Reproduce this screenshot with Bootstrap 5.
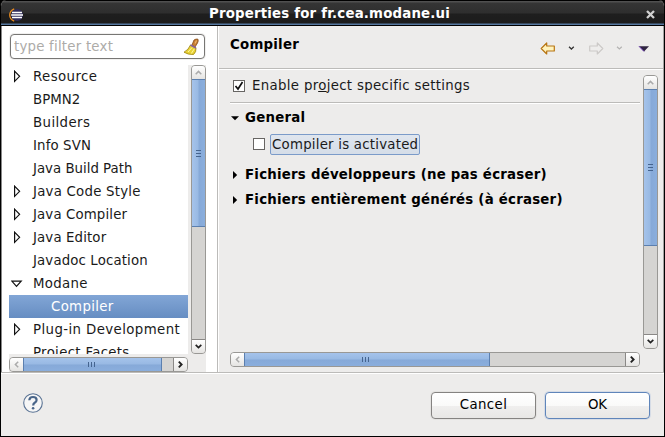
<!DOCTYPE html>
<html lang="en">
<head>
<meta charset="utf-8">
<title>Properties for fr.cea.modane.ui</title>
<link href="https://cdn.jsdelivr.net/npm/bootstrap@5.3.0/dist/css/bootstrap.min.css" rel="stylesheet">
<style>
body{font:13.33px/23px "DejaVu Sans",sans-serif;color:#1a1a1a;background:#000;width:665px;height:437px;overflow:hidden}
svg{display:block;flex:none}
.win{width:665px;height:437px;background:#edeceb;border:solid #000;border-width:0 1px 1px;border-radius:6px 6px 0 0;overflow:hidden}
.titlebar{height:26px;background:linear-gradient(#000 0 1px,#505050 1px 2px,#353535 3px,#2e2e2e 13px,#1e1e1e 14px,#1c1c1c 23px,#55779f 24px 25px,#000 25px);color:#fff;font-weight:bold;line-height:26px}
.titlebar .cap{padding:1px 11px 0 0;letter-spacing:.19px}
.close-x{margin:2px 9px 0 0}
.main{height:346px}
.side{width:217px;background:#fff;border-right:1px solid #bcbbb9;border-left:1px solid #888;padding:8px 0 0 7px}
.filter{width:195px;height:25px;margin-left:1px;border:1px solid #777674;border-radius:4px;background:#fff;color:#adaba8;padding:0 4px 0 3px;box-shadow:0 0 0 1px #f1f0ef;letter-spacing:.22px}
.treebox{width:197px;height:307px;margin-top:6px;background:#edeceb}
.tree{width:179px;height:289px;background:#fff;overflow:hidden}
.node{height:23px;padding-left:2px}
.node .tw{width:22px}
.node .tw svg{margin-left:2px}
.node .tw svg.open{margin-left:0}
.node.sel{background:linear-gradient(#82a6d6,#668dc2);color:#fff;padding-left:20px}
.ls1{letter-spacing:.13px}.ls2{letter-spacing:.23px}.ls3{letter-spacing:.32px}.ls4{letter-spacing:.4px}
.pane{width:446px;border-left:1px solid #fff;border-right:1px solid #a3a2a1}
.head{height:42px;padding:0 13px 0 11px;font-weight:bold;color:#000}
.rule{height:2px;background:linear-gradient(#bcbbb9 50%,#fff 50%)}
.form-area{width:410px;height:282px;margin-left:11px}
.bold{font-weight:bold;color:#000}
.box{width:12px;height:12px;border:1px solid #676563;background:#fff;flex:none}
.foc{border:1px solid #7b9bc9;border-radius:2px;background:linear-gradient(#e0e6ee,#d5dde8);height:21px;line-height:19px;padding:0 1px}
.sb{background:#d5d4d2;border:1px solid #999895;border-radius:4px;overflow:hidden;flex:none}
.sb.v{width:15px}.sb.h{height:15px}
.sb .b{background:linear-gradient(#fff,#e5e4e2);flex:none}
.sb.v .b{height:14px}.sb.h .b{width:14px}
.v .b:first-child{border-bottom:1px solid #777}.v .b:last-child{border-top:1px solid #8a8886}
.h .b:first-child{border-right:1px solid #777}.h .b:last-child{border-left:1px solid #8a8886}
.th{flex:none;border:1px solid #5b7faf}
.v .th{margin:-1px -1px 0;width:15px;background:linear-gradient(90deg,#a5c3eb 0,#98b9e3 48%,#86a9d8 52%,#8aaedd)}
.h .th{margin:-1px 0 -1px -1px;height:15px;background:linear-gradient(#a5c3eb,#98b9e3 48%,#86a9d8 52%,#8aaedd)}
.foot{height:62px;padding:0 14px 0 21px}
.act{width:105px;height:27px;border:1px solid #858381;border-radius:4px;background:linear-gradient(#fff,#fafaf9 50%,#f0efee 52%,#e8e7e5);padding:0 0 2px;color:#000;font-size:13.33px;line-height:23px;box-shadow:0 0 0 1px #e4e3e1}
.act.def{border-color:#5f85ba;box-shadow:0 0 0 1px #d6dce6;margin-left:9px}
</style>
<script src="https://cdn.jsdelivr.net/npm/bootstrap@5.3.0/dist/js/bootstrap.bundle.min.js"></script>
</head>
<body>
<svg width="0" height="0" class="position-absolute"><defs>
<symbol id="tri" viewBox="0 0 9 13"><path d="M1.6 1.2V11.4L6.6 6.3Z" fill="#fff" stroke="#111" stroke-width="1.2"/></symbol>
<symbol id="up" viewBox="0 0 7 5"><path d="M.7 4.2L3.5 1.4L6.3 4.2" fill="none" stroke="currentColor" stroke-width="1.5"/></symbol>
<symbol id="dn" viewBox="0 0 7 5"><path d="M.7 .8L3.5 3.6L6.3 .8" fill="none" stroke="currentColor" stroke-width="1.7"/></symbol>
<symbol id="lf" viewBox="0 0 5 7"><path d="M4.2 .7L1.4 3.5L4.2 6.3" fill="none" stroke="currentColor" stroke-width="1.5"/></symbol>
<symbol id="rt" viewBox="0 0 5 7"><path d="M.8 .7L3.6 3.5L.8 6.3" fill="none" stroke="currentColor" stroke-width="1.9"/></symbol>
<symbol id="gv" viewBox="0 0 5 7"><path d="M0 .5H5M0 3.5H5M0 6.5H5" stroke="#45648f"/></symbol>
<symbol id="gh" viewBox="0 0 7 5"><path d="M.5 0V5M3.5 0V5M6.5 0V5" stroke="#45648f"/></symbol>
<symbol id="arr" viewBox="0 0 15 13"><path d="M1.2 6.5L6.7 1V4H14.3V9H6.7V12Z" stroke-width="1.2" stroke-linejoin="round"/></symbol>
</defs></svg>
<div class="win d-flex flex-column">
  <header class="titlebar d-flex align-items-center flex-shrink-0">
    <svg width="15" height="14" class="ms-2 mt-1" viewBox="0 0 15 14"><circle cx="8" cy="7" r="6" fill="#302c5b"/><path d="M5.2 .8C-.8 3.5-.8 10.5 5.2 13.2" fill="none" stroke="#e58a20" stroke-width="1.3"/><path d="M3 4.5H13M2.2 7H14M3 9.5H13" stroke="#fff" stroke-width="1.3"/></svg>
    <div class="cap flex-grow-1 text-center">Properties for fr.cea.modane.ui</div>
    <svg width="9" height="9" class="close-x" viewBox="0 0 9 9"><path d="M1 1L8 8M8 1L1 8" stroke="#d0d0d0" stroke-width="2.3"/></svg>
  </header>
  <div class="main d-flex flex-shrink-0">
    <aside class="side flex-shrink-0">
      <div class="filter d-flex align-items-center justify-content-between"><span>type filter text</span>
        <svg width="17" height="18" viewBox="0 0 17 18"><path d="M9 7L11 2Q13 .6 15 1.2Q15.6 3 14.5 5L12 9Z" fill="#c77d32" stroke="#854b18" stroke-width=".8"/><path d="M12 5.5L13.6 2.5" stroke="#efb666" stroke-width="1.2"/><path d="M7.5 7L13 10Q13.4 14 10.5 16.5Q5 16.8 1 14.2Q5.5 12 7.5 7Z" fill="#e8d233" stroke="#a68c16" stroke-width=".9"/><path d="M9 9.5L5 14M11.3 10.8L8.3 15.5" stroke="#fff6a0"/><path d="M7.5 7L13 10" stroke="#8a659a" stroke-width="1.5"/></svg>
      </div>
      <div class="treebox">
        <div class="d-flex justify-content-between">
          <div class="tree">
            <div class="node ls4 d-flex align-items-center"><span class="tw"><svg width="9" height="13"><use href="#tri"/></svg></span>Resource</div>
            <div class="node d-flex"><span class="tw"></span>BPMN2</div>
            <div class="node ls4 d-flex"><span class="tw"></span>Builders</div>
            <div class="node ls1 d-flex"><span class="tw"></span>Info SVN</div>
            <div class="node d-flex"><span class="tw"></span>Java Build Path</div>
            <div class="node ls2 d-flex align-items-center"><span class="tw"><svg width="9" height="13"><use href="#tri"/></svg></span>Java Code Style</div>
            <div class="node ls1 d-flex align-items-center"><span class="tw"><svg width="9" height="13"><use href="#tri"/></svg></span>Java Compiler</div>
            <div class="node ls1 d-flex align-items-center"><span class="tw"><svg width="9" height="13"><use href="#tri"/></svg></span>Java Editor</div>
            <div class="node ls1 d-flex"><span class="tw"></span>Javadoc Location</div>
            <div class="node ls3 d-flex align-items-center"><span class="tw"><svg class="open" width="12" height="8" viewBox="0 0 12 8"><path d="M.8 1.1H10.2L5.5 6.3Z" fill="#fff" stroke="#111" stroke-width="1.2"/></svg></span>Modane</div>
            <div class="node ls3 sel d-flex"><span class="tw"></span>Compiler</div>
            <div class="node ls4 d-flex align-items-center"><span class="tw"><svg width="9" height="13"><use href="#tri"/></svg></span>Plug-in Development</div>
            <div class="node ls3 d-flex"><span class="tw"></span>Project Facets</div>
          </div>
          <div class="sb v d-flex flex-column" style="height:289px">
            <div class="b d-flex align-items-center justify-content-center"><svg width="7" height="5" color="#aaa"><use href="#up"/></svg></div>
            <div class="th d-flex align-items-center justify-content-center" style="height:148px"><svg width="5" height="7"><use href="#gv"/></svg></div>
            <div class="b mt-auto d-flex align-items-center justify-content-center"><svg width="7" height="5" color="#222"><use href="#dn"/></svg></div>
          </div>
        </div>
        <div class="sb h d-flex" style="width:179px;margin-top:3px">
          <div class="b d-flex align-items-center justify-content-center"><svg width="5" height="7" color="#aaa"><use href="#lf"/></svg></div>
          <div class="th d-flex align-items-center justify-content-center" style="width:139px;padding-right:3px"><svg width="7" height="5"><use href="#gh"/></svg></div>
          <div class="b ms-auto d-flex align-items-center justify-content-center"><svg width="5" height="7" color="#222"><use href="#rt"/></svg></div>
        </div>
      </div>
    </aside>
    <main class="pane">
      <div class="head d-flex align-items-center">
        <span class="flex-grow-1 ls2" style="margin-top:-5px">Compiler</span>
        <svg width="110" height="13" viewBox="0 0 110 13" style="margin-top:2px"><use href="#arr" width="15" height="13" fill="#fff3bd" stroke="#b87512"/><path d="M29 4.8L31.4 7L33.8 4.8" fill="none" stroke="#333" stroke-width="1.3"/><g transform="translate(64 0) scale(-1 1)"><use href="#arr" width="15" height="13" fill="#eeedec" stroke="#cccac8"/></g><path d="M77 4.8L79.4 7L81.8 4.8" fill="none" stroke="#b4b3b2" stroke-width="1.2"/><path d="M99 4.2H109L104 9.6Z" fill="#2f2440"/><path d="M99 4.3L104 9.4" stroke="#6a35b5"/></svg>
      </div>
      <div class="rule"></div>
      <div class="d-flex" style="margin-top:5px">
        <div class="form-area flex-shrink-0">
          <div class="d-flex align-items-center" style="height:27px;padding:0 0 5px 3px"><span class="box"><svg width="10" height="10" viewBox="0 0 10 10"><path d="M1.5 5L4 8L8.5 1" fill="none" stroke="#111" stroke-width="1.7"/></svg></span><span class="ls3" style="margin:-2px 0 0 7px">Enable pr<u>o</u>ject specific settings</span></div>
          <div class="rule"></div>
          <div class="bold ls2 d-flex align-items-center" style="height:27px"><svg width="15" height="8" viewBox="0 0 15 8"><path d="M1 2.2H9L5 6.2Z"/></svg>General</div>
          <div class="d-flex align-items-center" style="height:26px;padding-left:23px"><span class="box"></span><span class="foc ls2" style="margin-left:5px">Compiler is activated</span></div>
          <div class="bold ls2 d-flex align-items-center" style="height:35px"><svg width="15" height="8" viewBox="0 0 15 8"><path d="M3 0V8L7.2 4Z"/></svg>Fichiers développeurs (ne pas écraser)</div>
          <div class="bold ls2 d-flex align-items-center" style="height:15px"><svg width="15" height="8" viewBox="0 0 15 8"><path d="M3 0V8L7.2 4Z"/></svg>Fichiers entièrement générés (à écraser)</div>
        </div>
        <div class="sb v d-flex flex-column" style="height:274px;margin-left:3px">
          <div class="b d-flex align-items-center justify-content-center"><svg width="7" height="5" color="#aaa"><use href="#up"/></svg></div>
          <div class="th d-flex align-items-center justify-content-center" style="height:157px"><svg width="5" height="7"><use href="#gv"/></svg></div>
          <div class="b mt-auto d-flex align-items-center justify-content-center"><svg width="7" height="5" color="#222"><use href="#dn"/></svg></div>
        </div>
      </div>
      <div class="sb h d-flex" style="width:410px;margin:-5px 0 0 11px">
        <div class="b d-flex align-items-center justify-content-center"><svg width="5" height="7" color="#aaa"><use href="#lf"/></svg></div>
        <div class="th d-flex align-items-center justify-content-center" style="width:246px;padding-right:3px"><svg width="7" height="5"><use href="#gh"/></svg></div>
        <div class="b ms-auto d-flex align-items-center justify-content-center"><svg width="5" height="7" color="#222"><use href="#rt"/></svg></div>
      </div>
    </main>
  </div>
  <div class="rule flex-shrink-0"></div>
  <footer class="foot d-flex align-items-center">
    <svg width="22" height="22" viewBox="0 0 22 22" class="me-auto" style="margin-top:-4px"><circle cx="11" cy="11" r="9.3" fill="#f6f6f6" stroke="#5a7394" stroke-width="1.1"/><path d="M7.3 8.2Q7.5 5 11 5Q14.6 5 14.6 8Q14.6 9.7 12.7 10.8Q11.2 11.7 11.2 13.4" fill="none" stroke="#496589" stroke-width="2.2"/><circle cx="11.1" cy="16.3" r="1.3" fill="#496589"/></svg>
    <button class="btn act ls4">Cancel</button>
    <button class="btn act def">OK</button>
  </footer>
</div>
</body>
</html>
